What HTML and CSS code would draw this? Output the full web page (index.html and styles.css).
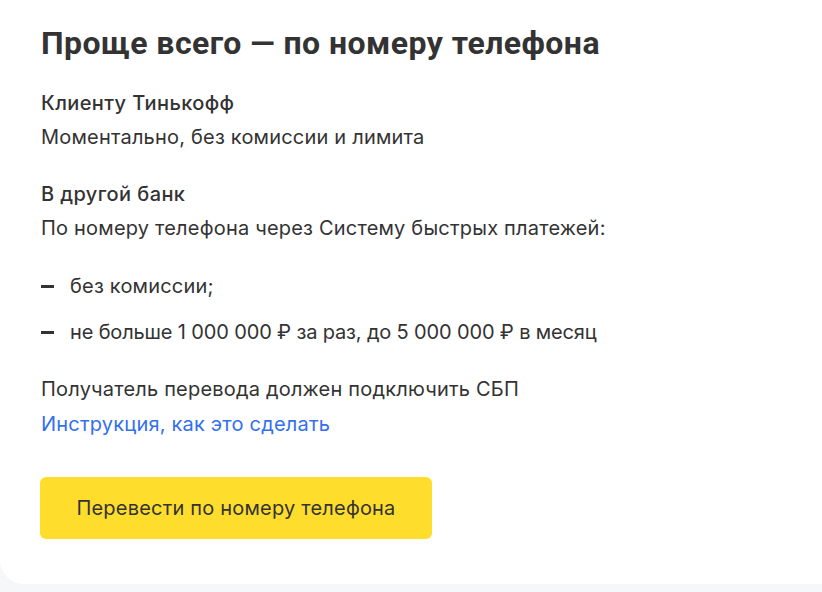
FILE: index.html
```html
<!DOCTYPE html>
<html lang="ru">
<head>
    <meta charset="UTF-8">
    <meta name="viewport" content="width=device-width, initial-scale=1.0">
    <title>Перевод по номеру телефона</title>
    <link rel="stylesheet" href="styles.css">
</head>
<body>
    <div class="card">
        <h2 class="card-title">Проще всего — по номеру телефона</h2>

        <div class="section">
            <div class="section-title">Клиенту Тинькофф</div>
            <p class="section-text">Моментально, без комиссии и лимита</p>
        </div>

        <div class="section">
            <div class="section-title">В другой банк</div>
            <p class="section-text">По номеру телефона через Систему быстрых платежей:</p>
            <ul class="dash-list">
                <li>без комиссии;</li>
                <li class="limits">не больше 1&nbsp;000&nbsp;000&nbsp;₽ за раз, до 5&nbsp;000&nbsp;000&nbsp;₽ в месяц</li>
            </ul>
        </div>

        <div class="section">
            <p class="section-text">Получатель перевода должен подключить СБП</p>
            <a class="link" href="#">Инструкция, как это сделать</a>
        </div>

        <button type="button" class="btn">Перевести по номеру телефона</button>
    </div>
</body>
</html>
```

FILE: styles.css
```css
body {
    margin: 0;
    background-color: #f6f7f8;
    font-family: Inter, "Noto Sans", sans-serif;
    color: #333;
    overflow: hidden;
}
.card {
    background-color: #fff;
    border-bottom-left-radius: 24px;
    padding: 25px 0 45px 41px;
}
.card-title {
    margin: 0;
    font-family: Roboto, sans-serif;
    font-size: 32px;
    line-height: 36px;
    font-weight: 700;
    letter-spacing: 0.45px;
}
.section {
    margin-top: 30px;
    font-size: 20px;
    line-height: 24px;
    letter-spacing: 0.2px;
}
.section + .section {
    margin-top: 33px;
}
.section-title {
    font-weight: 500;
    letter-spacing: 0.4px;
}
.section-text {
    margin: 10px 0 0;
}
.section-text:first-child {
    margin-top: 0;
}
.dash-list {
    list-style: none;
    margin: 34px 0 0;
    padding: 0;
}
.dash-list li {
    position: relative;
    padding-left: 29px;
}
.dash-list li + li {
    margin-top: 22px;
}
.dash-list li::before {
    content: "";
    position: absolute;
    left: 0;
    top: 11px;
    width: 13px;
    height: 3px;
    background-color: #333;
}
.dash-list .limits {
    letter-spacing: -0.15px;
}
.link {
    display: inline-block;
    margin-top: 11px;
    color: #336fee;
    text-decoration: none;
}
.btn {
    display: block;
    margin-top: 41px;
    margin-left: -1px;
    width: 392px;
    height: 62px;
    border: none;
    border-radius: 6px;
    background-color: #ffdd2d;
    color: #333;
    font-family: inherit;
    font-size: 20px;
    letter-spacing: 0.2px;
    cursor: pointer;
}
```
